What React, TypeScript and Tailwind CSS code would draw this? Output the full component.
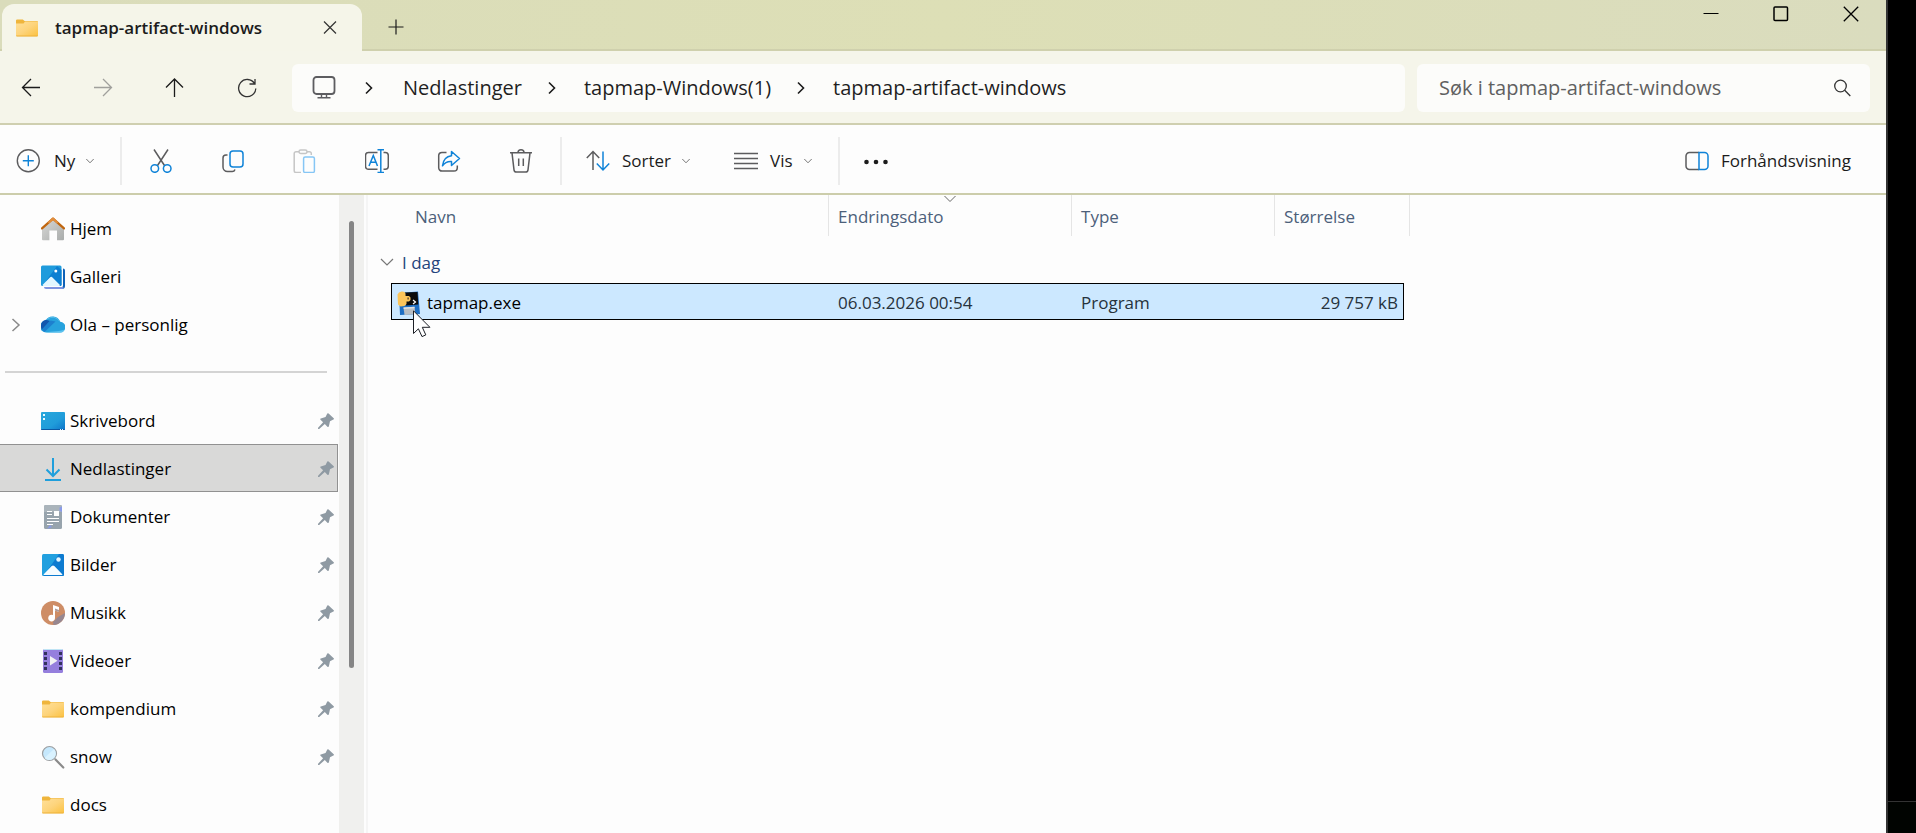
import type { ReactNode } from "react"

function FolderIcon() {
  return (
    <svg className="w-6 h-6 shrink-0" viewBox="0 0 24 24" aria-hidden="true">
      <defs>
        <linearGradient id="folder" x1="0" y1="0" x2="1" y2="1">
          <stop offset="0" stopColor="#ffe09a" />
          <stop offset="0.5" stopColor="#fdd47c" />
          <stop offset="1" stopColor="#fbc140" />
        </linearGradient>
      </defs>
      <path d="M1 4.600a1.200 1.200 0 0 1 1.200-1.200h5.600L9.600 5H22a1 1 0 0 1 1 1v4H1z" fill="#efb53c" />
      <path d="M1 7.400h7.600L10 5.600h13v13.600a1 1 0 0 1-1 1H2a1 1 0 0 1-1-1z" fill="url(#folder)" />
      <path d="M1 19.400h22a1 1 0 0 1-1 1H2a1 1 0 0 1-1-1z" fill="#edb13a" />
    </svg>
  )
}

function HomeIcon() {
  return (
    <svg className="w-6 h-6 shrink-0" viewBox="0 0 24 24" aria-hidden="true">
      <defs>
        <linearGradient id="house" x1="0" y1="0" x2="1" y2="1">
          <stop offset="0" stopColor="#d9d9d7" />
          <stop offset="1" stopColor="#a9acab" />
        </linearGradient>
      </defs>
      <path d="M1 11L12 1.500 23 11v11.200a1 1 0 0 1-1 1h-6v-9.800H8.400v9.800H2a1 1 0 0 1-1-1z" fill="url(#house)" />
      <path d="M1 11.400L12 1.600l11 9.800" fill="none" stroke="#c0660f" strokeWidth="2.2" strokeLinecap="round" strokeLinejoin="round" />
      <path d="M8 5.200l4-3.600 4 3.600" fill="none" stroke="#e08d3c" strokeWidth="2.2" strokeLinecap="round" strokeLinejoin="round" />
    </svg>
  )
}

function GalleryIcon() {
  return (
    <svg className="w-6 h-6 shrink-0" viewBox="0 0 24 24" aria-hidden="true">
      <path d="M22 3.500a2 2 0 0 1 2 2V21a3 3 0 0 1-3 3h-1l2-3z" fill="#0f62b8" />
      <path d="M3 22h18.500l1.500 1a3 3 0 0 1-2 1H5a2 2 0 0 1-2-2z" fill="#7f95e0" />
      <rect x="0" y="0.5" width="20.5" height="20.5" rx="1.5" fill="#1f9bdc" />
      <path d="M20.500 5v14.500a1.500 1.500 0 0 1-1.500 1.500h-4L5 16 16 1z" fill="#0c7fd2" />
      <path d="M1.500 20l7.400-7.600a1.800 1.800 0 0 1 2.600 0L19 20a1.500 1.500 0 0 1-1 1H2.400a1.500 1.500 0 0 1-.9-1z" fill="#e3f7ff" />
      <circle cx="14.8" cy="6" r="1.5" fill="#fff" />
    </svg>
  )
}

function CloudIcon() {
  return (
    <svg className="w-6 h-6 shrink-0" viewBox="0 0 24 24" aria-hidden="true">
      <path d="M5.500 19.500A5.500 5.500 0 0 1 4.600 7.600 8 8 0 0 1 19.200 8.800 5.300 5.300 0 0 1 19 19.500z" fill="#27a2dd" />
      <path d="M5 6.800A6.300 6.300 0 0 0 1 16.500L9 8z" fill="#1356ad" />
      <path d="M1 16.400a5.500 5.500 0 0 0 2.500 2.500L14.500 8.500l-5-1z" fill="#1d80cf" />
      <path d="M4.600 19.500h14.900a4.900 4.900 0 0 0 4.300-3c-3 1.700-13.400 1.800-19.200 3z" fill="#5cc3ef" />
      <path d="M6.500 6a8 8 0 0 1 12 2.200" fill="none" stroke="#54bdea" strokeWidth="1" />
    </svg>
  )
}

function DesktopIcon() {
  return (
    <svg className="w-6 h-6 shrink-0" viewBox="0 0 24 24" aria-hidden="true">
      <defs>
        <linearGradient id="desk" x1="0" y1="0" x2="1" y2="1">
          <stop offset="0" stopColor="#28a8dc" />
          <stop offset="0.6" stopColor="#209cda" />
          <stop offset="1" stopColor="#0d74c9" />
        </linearGradient>
      </defs>
      <rect x="0" y="3" width="24" height="18" rx="1" fill="url(#desk)" />
      <path d="M0 20h24a1 1 0 0 1-1 1H1a1 1 0 0 1-1-1z" fill="#0c57a3" />
      <path d="M2 5h2v2H2zM2 9h2v2H2z" fill="#e8fbff" />
      <path d="M19 20h1v1h-1zM21 20h1v1h-1z" fill="#d6f2ff" />
    </svg>
  )
}

function DownloadIcon() {
  return (
    <svg className="w-6 h-6 shrink-0" viewBox="0 0 24 24" fill="none" stroke="#1f9fdc" strokeWidth="2" aria-hidden="true">
      <path d="M12 1v18M5.500 12.500L12 19l6.500-6.500" />
      <path d="M4 23h16" />
    </svg>
  )
}

function DocumentIcon() {
  return (
    <svg className="w-6 h-6 shrink-0" viewBox="0 0 24 24" aria-hidden="true">
      <rect x="3" y="0" width="18" height="24" rx="1.5" fill="#98a4ad" />
      <path d="M3 1.500A1.500 1.500 0 0 1 4.500 0h15A1.500 1.500 0 0 1 21 1.500V7H3z" fill="#aab4bb" />
      <path d="M18.500 2.500L21 1.500V7l-2.500-1z" fill="#8a9be8" />
      <path d="M6 24l3-4 2 2z" fill="#8a9be8" />
      <path d="M6 6.500h5M6 9.500h5M6 13.500h12M6 16.500h12M6 19.500h6" stroke="#fff" strokeWidth="1.2" />
      <rect x="13" y="6" width="5" height="5" fill="#fff" />
    </svg>
  )
}

function PictureIcon() {
  return (
    <svg className="w-6 h-6 shrink-0" viewBox="0 0 24 24" aria-hidden="true">
      <rect x="1" y="1" width="22" height="22" rx="1.5" fill="#22a0df" />
      <path d="M23 4v17.500a1.500 1.500 0 0 1-1.500 1.500H2.500L18 1h3.500A1.500 1.500 0 0 1 23 2.500z" fill="#0d7bd0" />
      <path d="M2.500 21.500l8.200-8.400a1.800 1.800 0 0 1 2.600 0l8.200 8.400c-.3.400-.6.500-1 .5H3.500c-.4 0-.8-.1-1-.5z" fill="#f5fcff" />
      <circle cx="17.5" cy="6.5" r="2.2" fill="#e3f6ff" />
    </svg>
  )
}

function MusicIcon() {
  return (
    <svg className="w-6 h-6 shrink-0" viewBox="0 0 24 24" aria-hidden="true">
      <circle cx="12" cy="12" r="12" fill="#ce8d66" />
      <path d="M24 12a12 12 0 0 1-11.500 12L12 21l5-5z" fill="#978790" />
      <path d="M12 4l6 2v5l-4-1.500V17a3.400 3.400 0 1 1-2-3z" fill="#fff" />
      <path d="M14 7.500l4 1.500v2l-4-1.500z" fill="#ad9a98" />
    </svg>
  )
}

function VideoIcon() {
  return (
    <svg className="w-6 h-6 shrink-0" viewBox="0 0 24 24" aria-hidden="true">
      <rect x="2" y="0" width="20" height="24" rx="1.5" fill="#957fdd" />
      <path d="M2.500 0h19v1h-19z" fill="#bfe4f5" />
      <path d="M3 3h3v3H3zM3 8h3v3H3zM3 13h3v3H3zM3 18h3v3H3zM18 3h3v3h-3zM18 8h3v3h-3zM18 13h3v3h-3zM18 18h3v3h-3z" fill="#33325e" />
      <path d="M9 7l7.500 4.800L9 16.500z" fill="#f1f2f2" />
    </svg>
  )
}

function MagnifierIcon() {
  return (
    <svg className="w-6 h-6 shrink-0" viewBox="0 0 24 24" aria-hidden="true">
      <path d="M14.500 14.500l7.800 8" stroke="#8b8b8b" strokeWidth="2.2" strokeLinecap="round" />
      <circle cx="8.5" cy="8.5" r="7" fill="#c5e8fd" stroke="#9d9fa1" strokeWidth="1.2" />
      <path d="M3.500 13L13 4a6.200 6.200 0 0 1-1 9.700 6.300 6.300 0 0 1-8.500-.7z" fill="#d9f2ff" />
    </svg>
  )
}

function PinIcon() {
  return (
    <svg className="w-4 h-4 shrink-0" viewBox="0 0 16 16" fill="#8f9aa3" aria-hidden="true">
      <path d="M9.300.5a.9.900 0 0 1 1.300 0l5.100 4.700c.5.500.3 1.200-.3 1.400L12 8.200l-1.100 5.100c-.2.800-1 .9-1.500.4L6.800 10.900 1.200 16 0 16l.1-1.300L5.100 9.200 2.500 6.800c-.5-.5-.4-1.200.3-1.400L7.500 4z" />
    </svg>
  )
}

// Python floppy icon of the packed program
function ProgramIcon() {
  return (
    <svg className="w-6 h-6" viewBox="0 0 24 24" aria-hidden="true">
      <path d="M2 2l19-1.500L23 23l-20 1z" fill="#1e6fc4" />
      <path d="M8 1.500l12.500-.5.800 12.500L9 14.500z" fill="#0b0b0b" />
      <path d="M6.500 16.500l11-.8.800 7.500-10.800.8z" fill="#b9bec3" />
      <path d="M6.500 16.500l11-.8.200 1.500-11 .8z" fill="#dfe2e4" />
      <path d="M.5 3.500Q1.500.8 4.500.5q3.500-.5 4 2V5h3.500l1.500 1.500V9L12 10.500H9.500V13l-2 2-4 .5-2.500-2z" fill="#fcc55a" />
      <path d="M10.500 6.500h1.200v2h-1.200z" fill="#3b3226" />
      <path d="M16 9l2.500 2-2.500 2" fill="none" stroke="#fff" strokeWidth="1.2" />
    </svg>
  )
}

function Pointer() {
  return (
    <svg className="absolute left-4 top-[19px] w-5 h-7 z-10" viewBox="0 0 20 28" aria-hidden="true">
      <path d="M.5.800v22.700l4.900-4.700L9 26.600l3.800-1.700-3.500-7.600h7.600z" fill="#fff" stroke="#1c1f26" strokeWidth="1" />
    </svg>
  )
}

function SmallChevron() {
  return (
    <svg className="w-2 h-2" viewBox="0 0 8 8" fill="none" stroke="#777" aria-hidden="true">
      <path d="M.3 2l3.700 3.800L7.700 2" />
    </svg>
  )
}

function CrumbChevron() {
  return (
    <svg className="w-3 h-4" viewBox="0 0 12 16" fill="none" stroke="#1b1b1b" strokeWidth="1.6" aria-hidden="true">
      <path d="M3 2.500l5.500 5.500L3 13.500" />
    </svg>
  )
}

const gray = "#5c5c5e"
const blue = "#0f83d8"

const tools: { label: string; art: ReactNode }[] = [
  {
    label: "Klipp ut",
    art: (
      <>
        <path d="M5 .5l10.800 16.500M19 .5L8.200 17" stroke={gray} />
        <circle cx="5.8" cy="19.5" r="3.8" stroke={blue} />
        <circle cx="18.2" cy="19.5" r="3.8" stroke={blue} />
      </>
    ),
  },
  {
    label: "Kopier",
    art: (
      <>
        <rect x="9" y="2" width="13" height="16" rx="3" stroke={blue} />
        <path d="M6.500 6H5a3 3 0 0 0-3 3v9a4.500 4.500 0 0 0 4.500 4.500H11a3 3 0 0 0 3-2" stroke={gray} />
      </>
    ),
  },
  {
    label: "Lim inn",
    art: (
      <>
        <path d="M8 23.500H3A1.800 1.800 0 0 1 1.200 21.700V4.500A1.800 1.800 0 0 1 3 2.700h3M14 2.700h2.500a1.800 1.800 0 0 1 1.800 1.800V6" stroke="#c6c6c6" />
        <rect x="6" y="1" width="8" height="3.4" rx="1.7" stroke="#c6c6c6" />
        <rect x="10.6" y="8" width="10.8" height="15.5" rx="1.6" stroke="#86c6f5" />
      </>
    ),
  },
  {
    label: "Gi nytt navn",
    art: (
      <>
        <path d="M12.500 3.500H3.500a3 3 0 0 0-3 3v10.800a3 3 0 0 0 3 3h9M18.500 3.500h1.800a3 3 0 0 1 3 3v10.800a3 3 0 0 1-3 3h-1.800" stroke={gray} />
        <path d="M12.500.8h6.500M12.500 23.400h6.500M15.800.8v22.600M4 17l4.300-10.500L12.500 17M5.500 13.300h5.600" stroke={blue} />
      </>
    ),
  },
  {
    label: "Del",
    art: (
      <>
        <path d="M9.500 3.500H5a3.300 3.300 0 0 0-3.300 3.300v12A3.300 3.300 0 0 0 5 22.100h12a3.300 3.300 0 0 0 3.300-3.300v-2.300" stroke={gray} />
        <path d="M14.500 2.500l8 7-8 7v-4c-4.200-.3-6.800 1-9 4.300.6-5.600 3.600-9.300 9-10z" stroke={blue} strokeLinejoin="round" />
      </>
    ),
  },
  {
    label: "Slett",
    art: (
      <path d="M1 3.800h22M9 3.800a3 3 0 0 1 6 0M3 3.800l2 17a2.600 2.600 0 0 0 2.600 2.300h8.800a2.600 2.600 0 0 0 2.600-2.300l2-17M9.700 9.500v7.500M14.300 9.500v7.500" stroke={gray} />
    ),
  },
]

const places: { name: string; icon: ReactNode; expandable?: boolean }[] = [
  { name: "Hjem", icon: <HomeIcon /> },
  { name: "Galleri", icon: <GalleryIcon /> },
  { name: "Ola – personlig", icon: <CloudIcon />, expandable: true },
]

const pinned: { name: string; icon: ReactNode; selected?: boolean; unpinned?: boolean }[] = [
  { name: "Skrivebord", icon: <DesktopIcon /> },
  { name: "Nedlastinger", icon: <DownloadIcon />, selected: true },
  { name: "Dokumenter", icon: <DocumentIcon /> },
  { name: "Bilder", icon: <PictureIcon /> },
  { name: "Musikk", icon: <MusicIcon /> },
  { name: "Videoer", icon: <VideoIcon /> },
  { name: "kompendium", icon: <FolderIcon /> },
  { name: "snow", icon: <MagnifierIcon /> },
  { name: "docs", icon: <FolderIcon />, unpinned: true },
]

function TitleBar() {
  return (
    <header className="flex h-[51px] border-b-2 border-[#cfd0ad] bg-linear-to-r from-[#dadcbb] via-[#dddfb6] to-[#dadcbe]">
      <div className="flex items-center h-[47px] mt-1 ml-[2px] w-[360px] rounded-t-xl bg-[#f5f5e9] pl-[13px] pr-[22px] shadow-[0_2px_0_#f5f5e9]">
        <FolderIcon />
        <span className="ml-4 text-[17px] font-semibold text-[#1b1b1b] whitespace-nowrap">tapmap-artifact-windows</span>
        <button aria-label="Lukk fane" className="ml-auto">
          <svg className="w-5 h-5" viewBox="0 0 20 20" stroke="#333" strokeWidth="1.2">
            <path d="M4 3.500l12 12M16 3.500L4 15.500" />
          </svg>
        </button>
      </div>
      <button aria-label="Ny fane" className="flex items-center justify-center w-12 h-12 ml-[10px] mt-[3px]">
        <svg className="w-4 h-4" viewBox="0 0 16 16" stroke="#1b1b1b" strokeWidth="1.2">
          <path d="M8 .5v15M.5 8h15" />
        </svg>
      </button>
      <div className="flex ml-auto h-[27px]">
        <button aria-label="Minimer" className="flex items-center justify-center w-[70px]">
          <svg className="w-4 h-4" viewBox="0 0 16 16" stroke="#000">
            <path d="M.5 7.500h15" />
          </svg>
        </button>
        <button aria-label="Maksimer" className="flex items-center justify-center w-[70px]">
          <svg className="w-4 h-4" viewBox="0 0 16 16" fill="none" stroke="#000" strokeWidth="1.5">
            <rect x="1" y="1" width="13.5" height="13.5" rx="1" />
          </svg>
        </button>
        <button aria-label="Lukk" className="flex items-center justify-center w-[70px]">
          <svg className="w-4 h-4" viewBox="0 0 16 16" stroke="#000" strokeWidth="1.3">
            <path d="M.8.800l14.400 14.400M15.200.800L.8 15.200" />
          </svg>
        </button>
      </div>
    </header>
  )
}

function NavBar() {
  return (
    <div className="flex items-center h-[74px] border-b-2 border-[#cfcfb0] bg-[#f5f5ea] pt-[2px] pr-4">
      <div className="flex items-center gap-12 pl-5 w-[292px] shrink-0">
        <button aria-label="Tilbake">
          <svg className="w-6 h-6" viewBox="0 0 24 24" fill="none" stroke="#1b1b1b" strokeWidth="1.3">
            <path d="M20 11.500H2.800M11 3l-8.500 8.500L11 20" />
          </svg>
        </button>
        <button aria-label="Frem">
          <svg className="w-6 h-6" viewBox="0 0 24 24" fill="none" stroke="#a0a09c" strokeWidth="1.3">
            <path d="M2 11.500h17.200M11 3l8.500 8.500L11 20" />
          </svg>
        </button>
        <button aria-label="Opp">
          <svg className="w-6 h-6" viewBox="0 0 24 24" fill="none" stroke="#1b1b1b" strokeWidth="1.3">
            <path d="M10.500 21V3.500M2 11.500L10.500 3l8.500 8.500" />
          </svg>
        </button>
        <button aria-label="Oppdater">
          <svg className="w-6 h-6" viewBox="0 0 24 24" fill="none" stroke="#333" strokeWidth="1.3">
            <path d="M18.500 7.500A8.600 8.600 0 1 0 19.800 12.500M19 3v5h-5.500" />
          </svg>
        </button>
      </div>
      <nav aria-label="Adresse" className="flex items-center flex-1 h-12 rounded-md bg-[#fcfcfa] pl-5 text-[20px] text-[#1f1f1f] whitespace-nowrap">
        <button aria-label="Denne PC-en">
          <svg className="w-6 h-6" viewBox="0 0 24 24" fill="none" stroke="#5d5d60" strokeWidth="1.8" aria-hidden="true">
            <rect x="1.5" y="1" width="21" height="17" rx="3" />
            <path d="M9.500 18v3M14.500 18v3M5.500 21.800h13" strokeWidth="1.4" />
          </svg>
        </button>
        <span className="ml-[27px]"><CrumbChevron /></span>
        <a href="#nedlastinger" className="ml-7">Nedlastinger</a>
        <span className="ml-6"><CrumbChevron /></span>
        <a href="#tapmap" className="ml-[26px]">tapmap-Windows(1)</a>
        <span className="ml-6"><CrumbChevron /></span>
        <a href="#artifact" className="ml-[26px]">tapmap-artifact-windows</a>
      </nav>
      <label className="flex items-center w-[453px] h-12 ml-3 rounded-md bg-[#fcfcfa] pl-[22px] pr-[19px]">
        <input
          type="search"
          aria-label="Søk"
          placeholder="Søk i tapmap-artifact-windows"
          className="flex-1 min-w-0 text-[20px] bg-transparent outline-none placeholder:text-[#606060]"
        />
        <svg className="w-[18px] h-[18px]" viewBox="0 0 18 18" fill="none" stroke="#333" strokeWidth="1.3" aria-hidden="true">
          <circle cx="7.5" cy="7" r="5.8" />
          <path d="M11.700 11.200l5.600 5.800" />
        </svg>
      </label>
    </div>
  )
}

function Divider() {
  return <div className="w-[2px] h-12 bg-[#ececec]" />
}

function Toolbar() {
  return (
    <div className="flex items-center h-[70px] border-b-2 border-[#cccdab] bg-[#fdfdfd] pt-1 pl-4 text-[17px] text-[#1b1b1b]">
      <button className="flex items-center w-[104px]">
        <svg className="w-6 h-6" viewBox="0 0 24 24" fill="none" strokeWidth="1.4" aria-hidden="true">
          <circle cx="12.3" cy="11.7" r="11" stroke={gray} />
          <path d="M12.300 6.200v11M6.800 11.700h11" stroke={blue} />
        </svg>
        <span className="ml-[14px] mr-[11px]">Ny</span>
        <SmallChevron />
      </button>
      <Divider />
      <div className="flex gap-12 px-[27px]">
        {tools.map((tool) => (
          <button key={tool.label} aria-label={tool.label}>
            <svg className="w-6 h-6" viewBox="0 0 24 24" fill="none" strokeWidth="1.5">
              {tool.art}
            </svg>
          </button>
        ))}
      </div>
      <Divider />
      <button className="flex items-center ml-6">
        <svg className="w-6 h-6" viewBox="0 0 24 24" fill="none" strokeWidth="1.5" aria-hidden="true">
          <path d="M7 21V2.500M.8 9L7 2.500 13.200 9" stroke={gray} />
          <path d="M17 2.500V21M10.800 14.500L17 21l6.200-6.500" stroke={blue} />
        </svg>
        <span className="ml-3 mr-[11px]">Sorter</span>
        <SmallChevron />
      </button>
      <button className="flex items-center ml-11">
        <svg className="w-6 h-6" viewBox="0 0 24 24" stroke={gray} strokeWidth="1.5" aria-hidden="true">
          <path d="M0 4.500h24M0 9.500h24M0 14.500h24M0 19.500h24" />
        </svg>
        <span className="ml-3 mr-[11px]">Vis</span>
        <SmallChevron />
      </button>
      <span className="ml-[26px]"><Divider /></span>
      <button aria-label="Se mer" className="ml-6">
        <svg className="w-6 h-6" viewBox="0 0 24 24" fill="#1b1b1b">
          <circle cx="2.5" cy="13" r="2.3" />
          <circle cx="12" cy="13" r="2.3" />
          <circle cx="21.5" cy="13" r="2.3" />
        </svg>
      </button>
      <button className="flex items-center gap-3 ml-auto mr-[35px]">
        <svg className="w-6 h-6" viewBox="0 0 24 24" fill="none" strokeWidth="1.5" aria-hidden="true">
          <path d="M14 3.500H4.500A3.500 3.500 0 0 0 1 7v10a3.500 3.500 0 0 0 3.500 3.500H14" stroke={gray} />
          <path d="M14 3.500h5.500A3.500 3.500 0 0 1 23 7v10a3.500 3.500 0 0 1-3.500 3.500H14z" stroke={blue} />
        </svg>
        Forhåndsvisning
      </button>
    </div>
  )
}

function Sidebar() {
  return (
    <aside className="flex w-[364px] shrink-0 text-[17px] text-black">
      <div className="w-[339px] pt-[9px]">
        {places.map((place) => (
          <button key={place.name} className="flex items-center w-full h-12 pt-px pl-[11px] text-left">
            <span className="w-[30px]">
              {place.expandable && (
                <svg className="w-[10px] h-4" viewBox="0 0 10 16" fill="none" stroke="#8a8a8a" strokeWidth="1.5" aria-hidden="true">
                  <path d="M1.500 2l6.500 6-6.500 6" />
                </svg>
              )}
            </span>
            {place.icon}
            <span className="ml-[5px]">{place.name}</span>
          </button>
        ))}
        <div className="flex items-center h-12 pl-[5px] pr-3">
          <hr className="w-full border-0 h-[2px] bg-[#d4d4d4]" />
        </div>
        {pinned.map((item) => (
          <button
            key={item.name}
            className={
              item.selected
                ? "flex items-center w-[338px] h-12 pt-px pl-[41px] pr-[3px] text-left bg-[#d9d9d8] border border-l-0 border-[#919191]"
                : "flex items-center w-[338px] h-12 pt-px pl-[41px] pr-1 text-left"
            }
          >
            {item.icon}
            <span className="ml-[5px]">{item.name}</span>
            {!item.unpinned && (
              <span className="ml-auto">
                <PinIcon />
              </span>
            )}
          </button>
        ))}
      </div>
      <div className="w-[25px] bg-[#f0f0ee] pt-[26px] pl-[10px]">
        <div className="w-[5px] h-[447px] rounded-full bg-[#858585]" />
      </div>
    </aside>
  )
}

function FileList() {
  return (
    <main className="flex-1 ml-[2px] border-l-2 border-[#f5f5f5]">
      <table className="w-[1042px] table-fixed border-separate border-spacing-0 text-[17px] text-left">
        <colgroup>
          <col className="w-[23px]" />
          <col className="w-[438px]" />
          <col className="w-[243px]" />
          <col className="w-[203px]" />
          <col className="w-[129px]" />
          <col className="w-[6px]" />
        </colgroup>
        <thead>
          <tr className="h-[41px] text-[#4c607a]">
            <th colSpan={2} className="border-r border-[#e5e5e5] p-0 pl-[47px] pt-[2px] font-normal">Navn</th>
            <th aria-sort="descending" className="relative border-r border-[#e5e5e5] p-0 pl-[9px] pt-[2px] font-normal">
              <svg className="absolute top-0 left-1/2 -translate-x-1/2 w-3 h-2" viewBox="0 0 12 8" fill="none" stroke="#666" aria-hidden="true">
                <path d="M.5 1L6 6.500 11.500 1" />
              </svg>
              Endringsdato
            </th>
            <th className="border-r border-[#e5e5e5] p-0 pl-[9px] pt-[2px] font-normal">Type</th>
            <th colSpan={2} className="border-r border-[#e5e5e5] p-0 pl-[9px] pt-[2px] font-normal">Størrelse</th>
          </tr>
        </thead>
        <tbody>
          <tr className="h-[47px]">
            <th colSpan={6} className="p-0 pt-[6px] pl-3 font-normal">
              <button className="flex items-center gap-2 text-[#24447c]">
                <svg className="w-[14px] h-3" viewBox="0 0 14 12" fill="none" stroke="#777" strokeWidth="1.2" aria-hidden="true">
                  <path d="M1 2l6 6 6-6" />
                </svg>
                I dag
              </button>
            </th>
          </tr>
          <tr className="h-[37px] text-[#26323c]">
            <td className="p-0" />
            <td className="border-y border-l border-black bg-[#cce8ff] p-0 pt-[2px] pl-[5px]">
              <div className="flex items-center text-black">
                <span className="relative">
                  <ProgramIcon />
                  <Pointer />
                </span>
                <span className="ml-[6px]">tapmap.exe</span>
              </div>
            </td>
            <td className="border-y border-black bg-[#cce8ff] p-0 pt-[2px] pl-[9px]">06.03.2026 00:54</td>
            <td className="border-y border-black bg-[#cce8ff] p-0 pt-[2px] pl-[9px]">Program</td>
            <td className="border-y border-r border-black bg-[#cce8ff] p-0 pt-[2px] pr-[5px] text-right">29 757 kB</td>
            <td className="p-0" />
          </tr>
        </tbody>
      </table>
    </main>
  )
}

export default function App() {
  return (
    <div className="flex min-h-screen bg-black font-['Open_Sans','Noto_Sans',sans-serif]">
      <div className="flex flex-col flex-1 min-w-0 border-r-2 border-[#333] bg-[#fdfdfd]">
        <TitleBar />
        <NavBar />
        <Toolbar />
        <div className="flex flex-1">
          <Sidebar />
          <FileList />
        </div>
      </div>
      {/* desktop strip behind the window */}
      <div className="flex flex-col justify-end w-7">
        <div className="h-8 border-t border-[#333] bg-[#010401]" />
      </div>
    </div>
  )
}
